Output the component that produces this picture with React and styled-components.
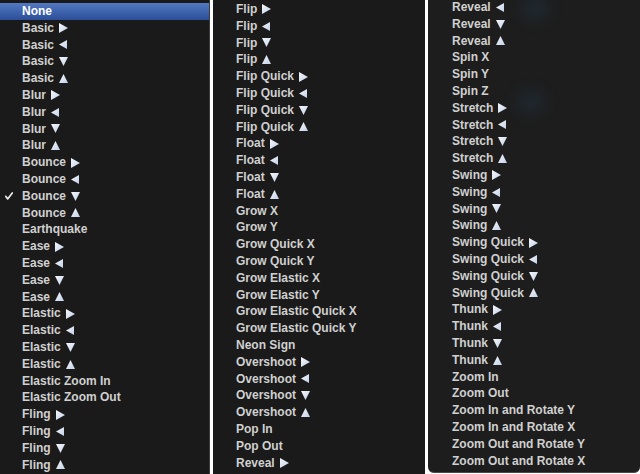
import React from "react";
import styled, { createGlobalStyle } from "styled-components";

const Global = createGlobalStyle`
  html, body { margin: 0; padding: 0; background: #ffffff; }
  body { width: 640px; height: 474px; overflow: hidden; }
`;

const Page = styled.div`
  display: flex;
  gap: 3px;
  width: 640px;
  height: 474px;
  background: #ffffff;
`;

const Column = styled.div`
  position: relative;
  width: ${(p) => p.$w}px;
  height: ${(p) => p.$h || 474}px;
  background: ${(p) => p.$bg || "#1b1b1b"};
  overflow: hidden;
  box-sizing: border-box;
  border-right: ${(p) => (p.$edge ? "1px solid #3c3c3c" : "none")};
  border-radius: ${(p) => p.$radius || "0"};
  border-bottom: ${(p) => (p.$bottom ? "1px solid #4a4a4a" : "none")};
`;

const List = styled.ul`
  position: relative;
  list-style: none;
  margin: ${(p) => p.$shift || 0}px 0 0 0;
  padding: ${(p) => p.$top}px 0 0 0;
`;

const Row = styled.li`
  display: flex;
  align-items: center;
  height: 16.8px;
  line-height: 16.8px;
  padding-left: 5px;
  font-family: "Liberation Sans", Arial, sans-serif;
  font-weight: bold;
  font-size: 12px;
  color: ${(p) => (p.$active ? "#ffffff" : "#d0d0d0")};
  background: ${(p) =>
    p.$active ? "linear-gradient(#5179c1, #2c4e99)" : "transparent"};
  white-space: nowrap;
`;

const Mark = styled.span`
  display: flex;
  align-items: center;
  flex: none;
  width: ${(p) => p.$w}px;
  height: 100%;
`;

const Label = styled.span`
  margin-right: 5px;
`;

const Arrow = styled.svg`
  display: block;
  flex: none;
`;

const Blob = styled.div`
  position: absolute;
  border-radius: 50%;
  background: ${(p) => p.$c};
  filter: blur(7px);
`;

function Tri({ d }) {
  const shapes = {
    r: { w: 9, h: 10, pts: "0,0 9,5 0,10" },
    l: { w: 8, h: 9, pts: "8,0 0,4.5 8,9" },
    d: { w: 9, h: 9, pts: "0,0 9,0 4.5,9" },
    u: { w: 9, h: 9, pts: "4.5,0 9,9 0,9" },
  };
  const s = shapes[d];
  return (
    <Arrow width={s.w} height={s.h} viewBox={`0 0 ${s.w} ${s.h}`}>
      <defs>
        <linearGradient id={`g${d}`} x1="0" y1="0" x2="1" y2="1">
          <stop offset="0" stopColor="#f6f7fa" />
          <stop offset="1" stopColor="#c2d1ea" />
        </linearGradient>
      </defs>
      <polygon points={s.pts} fill={`url(#g${d})`} />
    </Arrow>
  );
}

const four = (name) => [
  [name, "r"],
  [name, "l"],
  [name, "d"],
  [name, "u"],
];

const col1 = [
  ["None"],
  ...four("Basic"),
  ...four("Blur"),
  ...four("Bounce"),
  ["Earthquake"],
  ...four("Ease"),
  ...four("Elastic"),
  ["Elastic Zoom In"],
  ["Elastic Zoom Out"],
  ...four("Fling"),
];

const col2 = [
  ...four("Flip"),
  ...four("Flip Quick"),
  ...four("Float"),
  ["Grow X"],
  ["Grow Y"],
  ["Grow Quick X"],
  ["Grow Quick Y"],
  ["Grow Elastic X"],
  ["Grow Elastic Y"],
  ["Grow Elastic Quick X"],
  ["Grow Elastic Quick Y"],
  ["Neon Sign"],
  ...four("Overshoot"),
  ["Pop In"],
  ["Pop Out"],
  ["Reveal", "r"],
];

const col3 = [
  ["Reveal", "l"],
  ["Reveal", "d"],
  ["Reveal", "u"],
  ["Spin X"],
  ["Spin Y"],
  ["Spin Z"],
  ...four("Stretch"),
  ...four("Swing"),
  ...four("Swing Quick"),
  ...four("Thunk"),
  ["Zoom In"],
  ["Zoom Out"],
  ["Zoom In and Rotate Y"],
  ["Zoom In and Rotate X"],
  ["Zoom Out and Rotate Y"],
  ["Zoom Out and Rotate X"],
];

function Menu({ items, indent, active, checked }) {
  return items.map(([label, dir], i) => (
    <Row key={i} $active={i === active}>
      <Mark $w={indent - 5}>
        {i === checked && (
          <svg width="8" height="8" viewBox="0 0 8 8">
            <path
              d="M0.7 4.3 L2.7 6.9 L7.3 0.9"
              fill="none"
              stroke="#ececec"
              strokeWidth="1.7"
              strokeLinecap="round"
              strokeLinejoin="round"
            />
          </svg>
        )}
      </Mark>
      <Label>{label}</Label>
      {dir && <Tri d={dir} />}
    </Row>
  ));
}

export default function App() {
  return (
    <>
      <Global />
      <Page>
        <Column $w={210} $edge $bg="#1a1a1a">
          <List $top={3}>
            <Menu items={col1} indent={22} active={0} checked={11} />
          </List>
        </Column>
        <Column $w={212} $bg="#1a1a1a">
          <List $top={1}>
            <Menu items={col2} indent={23} />
          </List>
        </Column>
        <Column $w={212} $h={473} $bg="#1d1d1d" $radius="0 0 6px 6px" $bottom>
          <Blob $c="rgba(40,80,115,0.22)" style={{ left: 92, top: -2, width: 30, height: 22 }} />
          <Blob $c="rgba(40,80,115,0.2)" style={{ left: 88, top: 90, width: 30, height: 24 }} />
          <List $top={0} $shift={-1}>
            <Menu items={col3} indent={24} />
          </List>
        </Column>
      </Page>
    </>
  );
}
